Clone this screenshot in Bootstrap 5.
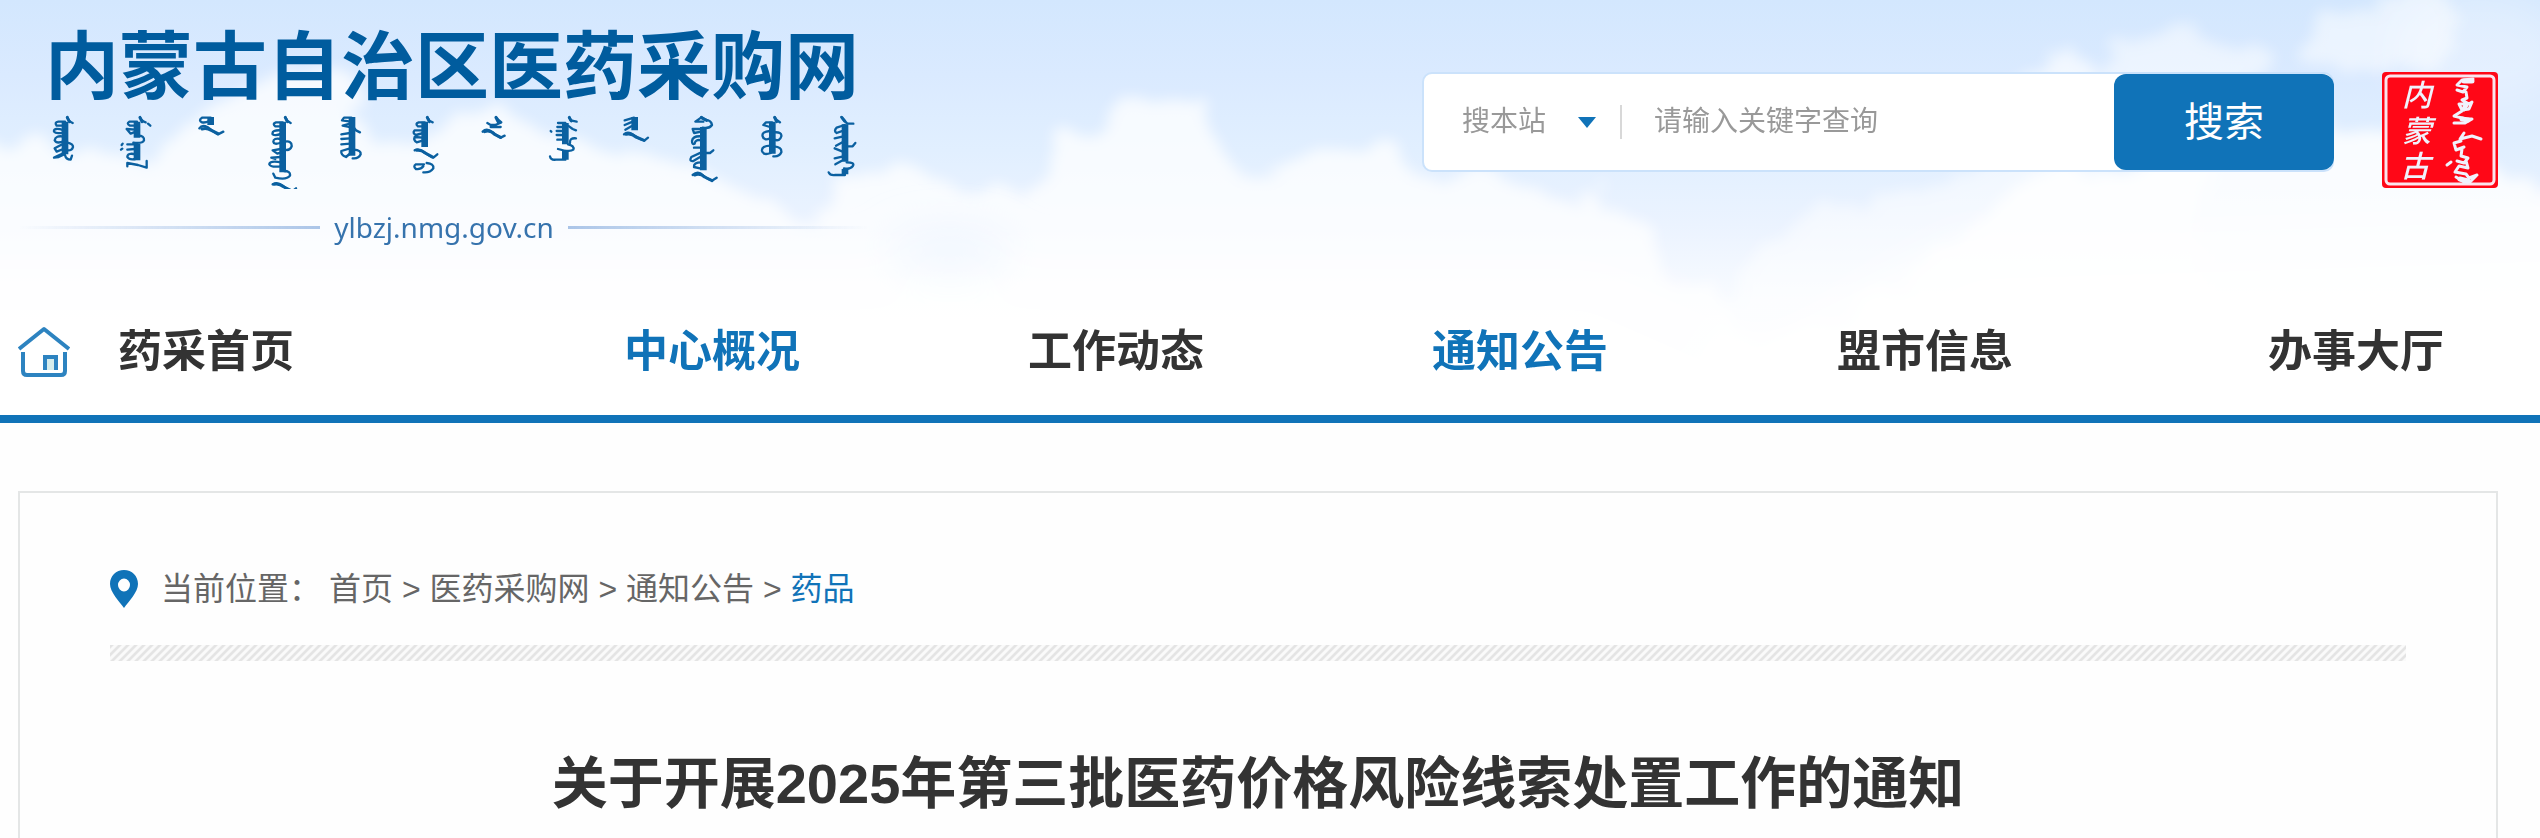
<!DOCTYPE html>
<html lang="zh-CN">
<head>
<meta charset="utf-8">
<meta name="viewport" content="width=device-width, initial-scale=1">
<title>内蒙古自治区医药采购网</title>
<link href="https://cdn.jsdelivr.net/npm/bootstrap@5.3.0/dist/css/bootstrap.min.css" rel="stylesheet">
<style>
:root { --brand: #1073b8; --ink: #333; }
body { font-family: "Liberation Sans", "Noto Sans CJK SC", sans-serif; background: #fefefe; color: var(--ink); }
a { text-decoration: none; }
.site-header { background: linear-gradient(#d3e7fe, #daeaff 18%, #e1efff 36%, #ebf3ff 54%, #f8fbff 72%, #fdfdfe); border-bottom: 8px solid var(--brand); overflow: hidden; }
.sky { inset: 0; width: 100%; height: 100%; }
.masthead { height: 285px; padding: 16px 42px 0 18px; }
.logo-block { width: 852px; }
.logo-name { font-size: 74px; line-height: 90px; color: #005c9e; padding-left: 27px; font-family: "Noto Sans CJK SC", sans-serif; }
.logo-script { width: 830px; height: 79px; margin: 4px 0 0 22px; }
.logo-url { font: 28px/44px "Noto Sans", sans-serif; color: #3673ad; gap: 14px; margin-top: 16px; }
.rule { height: 3px; background: linear-gradient(90deg, transparent, #abc5e8); }
.rule-end { background: linear-gradient(270deg, transparent, #abc5e8); }
.search-box { width: 912px; height: 100px; margin-top: 56px; background: #fff; border: 2px solid #cbe2fb; border-radius: 10px; }
.search-box .form-select, .search-box .form-control { border: 0; background-color: transparent; font-size: 28px; line-height: 40px; color: #999; box-shadow: none; }
.search-box .form-select { width: 196px; padding: 0 20px 0 38px; background-image: url("data:image/svg+xml,%3Csvg xmlns='http://www.w3.org/2000/svg' viewBox='0 0 18 11'%3E%3Cpath d='M0 0H18L9 11Z' fill='%231073b8'/%3E%3C/svg%3E"); background-size: 18px 11px; background-position: right 24px center; }
.search-box .form-control { padding: 0 32px; }
.search-box .form-control::placeholder { color: #999; opacity: 1; }
.split { width: 2px; height: 34px; background: #d8d8d8; }
.btn-search { width: 220px; font-size: 40px; color: #fff; background: var(--brand); border: 0; border-radius: 12px; margin-right: -2px; }
.btn-search:hover { color: #fff; background: #0c649f; }
.seal { width: 116px; height: 116px; margin: 56px 0 0 48px; }
.main-nav { display: grid; grid-template-columns: 492fr 404fr 404fr 404fr 406fr 372fr; height: 130px; padding: 4px 40px 0 18px; }
.main-nav a { font-size: 44px; line-height: 64px; font-weight: 700; color: var(--ink); }
.main-nav a.active { color: var(--brand); }
.main-nav a:last-child { padding-right: 56px; }
.home-icon { width: 52px; height: 52px; margin-right: 48px; }
.panel { margin: 68px 42px 0 18px; border: 2px solid #e4e6e6; border-bottom: 0; padding: 72px 90px 0; min-height: 347px; }
.crumbs { font-size: 32px; line-height: 48px; color: #666; }
.crumbs a { color: #666; }
.crumbs a.current { color: var(--brand); }
.pin { width: 28px; height: 38px; margin-right: 23px; }
.hatch { height: 16px; margin-top: 32px; background: linear-gradient(135deg, #e4e4e4 18%, #fafafa 30% 45%, #e4e4e4 57% 68%, #fafafa 80% 95%, #e4e4e4) 0 0 / 8px 8px; }
.article-title { font-size: 56px; line-height: 80px; font-weight: 700; margin: 83px 0 0; }
</style>
</head>
<body>
<header class="site-header position-relative">
  <svg class="sky position-absolute" viewBox="0 0 2540 415" preserveAspectRatio="none" aria-hidden="true">
    <defs>
      <filter id="puff" x="-5%" y="-20%" width="110%" height="140%" color-interpolation-filters="sRGB">
        <feTurbulence type="fractalNoise" baseFrequency=".02" numOctaves="4" seed="7" result="n"/>
        <feDisplacementMap in="SourceGraphic" in2="n" scale="60" xChannelSelector="R" yChannelSelector="G"/>
        <feGaussianBlur stdDeviation="7"/>
      </filter>
      <filter id="haze" x="-10%" y="-40%" width="120%" height="180%"><feGaussianBlur stdDeviation="22"/></filter>
    </defs>
    <g filter="url(#puff)" fill="#fff">
      <path opacity=".75" d="M-60 150Q60 130 150 165Q190 130 235 95Q290 50 340 80Q370 95 390 135Q450 150 500 105Q540 120 590 150Q700 160 780 210Q810 240 830 200Q870 160 940 180Q1010 200 1040 170Q1070 130 1100 140Q1120 95 1160 104Q1200 90 1215 110Q1230 165 1265 185Q1300 165 1370 145Q1420 150 1440 175Q1510 170 1550 195Q1610 195 1640 215Q1660 260 1700 285L1740 330L2600 400V460H-60Z"/>
      <path opacity=".8" d="M1760 340Q1870 320 1930 260Q1980 200 2080 172Q2200 140 2330 118Q2400 130 2420 150Q2500 170 2600 200V460H1700Z"/>
      <path opacity=".5" d="M1700 340Q1740 240 1820 220Q1880 180 1960 170Q2100 150 2200 150V400H1700Z"/>
      <path opacity=".65" d="M2000 100Q2030 45 2075 50Q2095 80 2130 100Z"/>
      <path opacity=".5" d="M2090 90Q2110 30 2170 20Q2230 45 2270 45Q2270 80 2230 100H2100Z"/>
      <path opacity=".5" d="M2300 50Q2310 10 2360 15Q2390 -30 2440 -10Q2470 40 2440 65Q2380 80 2320 65Z"/>
    </g>
    <g filter="url(#haze)">
      <path fill="#fff" opacity=".5" d="M-60 260H1600L1760 330L1960 230L2600 210V460H-60Z"/>
      <ellipse cx="950" cy="250" rx="60" ry="18" fill="#e4f0ff" opacity=".6"/>
      <ellipse cx="2480" cy="50" rx="90" ry="60" fill="#fff" opacity=".3"/>
    </g>
  </svg>

  <div class="masthead position-relative d-flex align-items-start">
    <div class="logo-block">
      <div class="logo-name fw-bold text-nowrap">内蒙古自治区医药采购网</div>
      <!-- vertical script ornament beneath the site name -->
      <svg class="logo-script d-block" viewBox="0 15 2490 237" fill="none" stroke="#0b60a0" stroke-width="7" stroke-linecap="round" stroke-linejoin="round" aria-hidden="true">
        <g stroke-width="20" stroke-linecap="butt">
          <path d="M75 50V148M291 50V98M291 116V166M512 36V60M728 50V202M936 36V80M936 80V152M1154 50V126"/>
          <path d="M1576 54V118M1784 36V76M1990 66V196M2197 50V146M2415 58V170M1576 138V164M2415 192V208"/>
        </g>
        <path stroke-width="9" d="M486 72Q500 68 514 76L534 86M702 238Q716 234 732 246L756 258M1130 136Q1144 134 1156 144L1178 156M1334 80Q1350 74 1364 88L1382 97M1758 88Q1774 84 1788 96L1812 106M1964 210Q1980 204 1994 216L2016 227M82 38L88 50M300 38L306 50M736 38L742 50M1162 38L1168 50M1368 38L1374 50M1588 38L1594 48M1984 38L2000 46M2204 38L2210 50M2406 38L2414 48"/>
        <path d="M82 36Q84 48 98 54M75 50H55Q42 52 50 62H75M72 76Q40 66 42 80Q48 88 72 82M72 95Q46 90 44 106Q50 118 72 108M70 116L44 130L50 140L70 132M80 112Q100 116 99 126Q96 138 80 136M68 146L42 158L56 156L72 148M75 150Q78 164 92 164L96 152"/>
        <path d="M300 36Q304 48 317 52M324 56L331 62M291 50H268Q258 56 270 62H288M286 74L260 72L272 86L288 80M294 92Q314 92 312 106Q308 116 280 113M286 118H262M284 132L262 134M245 120L248 116M243 134L247 131M288 148Q262 142 262 156Q268 166 286 162M262 184V174L294 180L320 188V168"/>
        <path d="M512 38H486Q474 46 486 52Q496 54 508 48M478 70Q486 58 502 66Q526 84 534 88L550 80"/>
        <path d="M736 36Q740 48 752 54M728 52H708Q696 56 706 64H724M724 76Q694 74 698 88Q706 94 724 86M722 102Q700 98 700 110Q702 120 720 114M734 110Q756 106 755 124Q750 138 734 134M722 132L698 136L712 146L724 142M724 156L694 158L706 162M724 172Q688 166 688 178Q692 188 724 184M732 198Q752 198 750 212Q740 226 706 218L700 206M698 238Q712 230 728 242Q748 258 758 258L768 250"/>
        <path d="M934 38H912L906 46L932 50M930 56L908 62L930 66M940 66L948 76L960 82M930 84L904 88M930 100L904 102M930 116L904 118M930 130L904 138Q902 150 918 156L932 144M942 134Q964 136 962 148Q956 162 938 160"/>
        <path d="M1162 36Q1166 48 1178 52M1154 52H1136Q1124 56 1134 64H1150M1150 76L1124 76Q1116 84 1128 90L1150 84M1148 98L1124 96Q1120 106 1130 112L1150 106M1124 136Q1136 128 1152 142Q1172 156 1180 158L1192 148M1152 178H1128Q1118 184 1128 192Q1142 194 1150 184M1160 174Q1182 176 1180 190Q1170 204 1150 202"/>
        <path d="M1368 36Q1376 48 1384 52L1366 60H1352L1342 54M1352 66H1382M1328 80Q1340 68 1358 82Q1376 96 1382 98L1394 92"/>
        <path d="M1588 36L1592 46L1610 50M1576 54H1554M1568 66H1552M1568 78H1550M1568 90H1550M1568 104H1552M1532 78L1534 80M1584 62L1598 72L1608 76M1608 100Q1588 98 1590 114M1584 118Q1604 122 1600 134Q1590 142 1554 132M1576 164H1548Q1532 166 1530 154"/>
        <path d="M1782 38L1754 46M1778 50L1754 60M1774 64L1756 74M1752 88Q1764 76 1784 92Q1804 106 1814 106L1824 98"/>
        <path d="M1984 36L1996 44Q2014 46 2016 60Q2008 72 1988 68M1980 40L1966 50H1990M1984 72L1958 72L1962 84L1984 80M1984 94Q1958 92 1956 108Q1956 120 1964 116Q1966 102 1984 106M1992 144H2010L2020 136M1984 128H1962M1984 142L1954 156Q1946 170 1960 168L1984 154M1984 172Q1960 172 1962 186L1980 190M1958 210Q1974 196 1990 212Q2008 226 2018 226L2030 218"/>
        <path d="M2204 36Q2208 46 2220 52M2196 52H2178L2170 60L2190 66M2190 78Q2164 80 2168 94Q2172 108 2190 100M2202 82Q2226 80 2224 94Q2220 110 2202 104M2192 122Q2164 122 2166 138Q2170 152 2192 144M2202 124Q2226 126 2224 142Q2218 156 2200 154"/>
        <path d="M2404 36L2412 46L2422 56H2440M2414 60L2390 68Q2380 78 2390 84L2412 76M2410 94L2384 100M2410 110L2388 122M2422 124H2438L2446 114M2408 140L2384 130M2410 154L2384 160M2420 172Q2446 172 2438 184Q2430 194 2412 190M2386 178L2404 168M2415 210H2386Q2370 212 2366 202"/>
      </svg>
      <div class="logo-url d-flex align-items-center">
        <span class="rule flex-fill"></span><span>ylbzj.nmg.gov.cn</span><span class="rule rule-end flex-fill"></span>
      </div>
    </div>

    <form class="search-box d-flex align-items-center ms-auto" role="search">
      <select class="form-select flex-shrink-0" aria-label="搜索范围"><option>搜本站</option></select>
      <span class="split flex-shrink-0"></span>
      <input class="form-control" type="search" placeholder="请输入关键字查询" aria-label="关键字">
      <button class="btn btn-search align-self-stretch flex-shrink-0" type="button">搜索</button>
    </form>

    <svg class="seal flex-shrink-0" viewBox="0 0 116 116" role="img" aria-label="内蒙古">
      <rect width="116" height="116" rx="4" fill="#ff0717"/>
      <rect x="4" y="4" width="108" height="108" rx="4" fill="none" stroke="#fbe5ee" stroke-width="3"/>
      <g fill="#f0f2fc" font-family="Noto Sans CJK SC, sans-serif" font-size="30" font-style="italic" font-weight="500">
        <text x="20" y="34">内</text><text x="20" y="70">蒙</text><text x="18" y="105">古</text>
      </g>
      <g fill="none" stroke="#f0f2fc" stroke-width="3" stroke-linecap="round" stroke-linejoin="round">
        <path d="M91 7L80 8L75 13L85 15L81 20L75 18M84 20L85 26L80 28L87 32L90 30L87 37L80 38L77 32L85 32M80 39L72 44L84 47L90 47L83 51L72 51"/>
        <path d="M82 61L78 67L90 64L99 67M79 69L72 71L74 78L82 75M80 77L79 84L86 86L82 91L75 89M84 89L86 96L77 94L73 100L84 102L87 106L95 103M74 105L82 110H88L94 104M65 93L69 90"/>
        <path stroke-width="5" d="M82 9H90M84 33L82 37M80 47L86 48M78 107L86 109"/>
      </g>
    </svg>
  </div>

  <nav class="main-nav position-relative align-items-center" aria-label="主导航">
    <a href="#" class="d-flex align-items-center">
      <svg class="home-icon" viewBox="0 0 52 52" fill="none" stroke="#2d83c0" stroke-width="4" aria-hidden="true">
        <path d="M1 23L26 3L51 23" stroke-linejoin="round"/>
        <path d="M5 26V45Q5 49 9 49H43Q47 49 47 45V26"/>
        <path d="M27 44V31H38V44" fill="#d5ecec"/>
      </svg>药采首页</a>
    <a href="#" class="text-center active">中心概况</a>
    <a href="#" class="text-center">工作动态</a>
    <a href="#" class="text-center active">通知公告</a>
    <a href="#" class="text-center">盟市信息</a>
    <a href="#" class="text-end">办事大厅</a>
  </nav>
</header>

<main class="panel">
  <nav class="crumbs d-flex align-items-center" aria-label="当前位置">
    <svg class="pin" viewBox="0 0 28 38" aria-hidden="true"><path fill="#1073b8" fill-rule="evenodd" d="M14 0C22 0 28 6 28 14C28 22 19 31 14 38C9 31 0 22 0 14C0 6 6 0 14 0ZM14 8.500A6 6.500 0 1 0 14 21.500A6 6.500 0 1 0 14 8.500Z"/></svg>
    <span class="me-2">当前位置：</span>
    <span><a href="#">首页</a> &gt; <a href="#">医药采购网</a> &gt; <a href="#">通知公告</a> &gt; <a href="#" class="current">药品</a></span>
  </nav>
  <div class="hatch"></div>
  <h1 class="article-title text-center">关于开展2025年第三批医药价格风险线索处置工作的通知</h1>
</main>
<script src="https://cdn.jsdelivr.net/npm/bootstrap@5.3.0/dist/js/bootstrap.bundle.min.js"></script>
</body>
</html>
